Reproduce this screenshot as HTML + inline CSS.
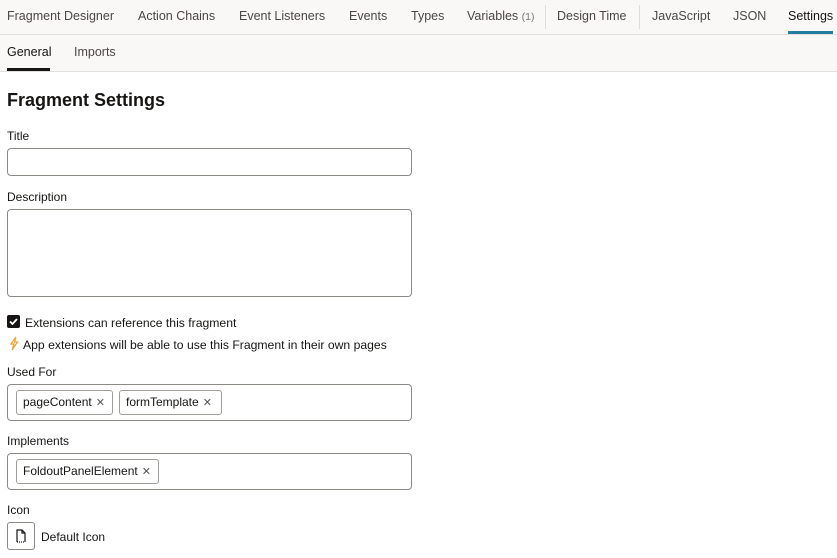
<!DOCTYPE html>
<html><head><meta charset="utf-8"><style>
*{box-sizing:border-box;margin:0;padding:0}
body{width:837px;height:558px;overflow:hidden;background:#fff;font-family:"Liberation Sans",sans-serif;color:#161513;position:relative;font-size:12px}
.a{position:absolute;white-space:nowrap}
.nav{position:absolute;left:0;top:0;width:837px;height:35px;background:#f9f8f6;border-bottom:1px solid #e2e0dd}
.sub{position:absolute;left:0;top:35px;width:837px;height:37px;background:#f9f8f6;border-bottom:1px solid #e2e0dd}
.t{font-size:12.5px;color:#4a4744;top:9px}
.lbl{font-size:12px;color:#161513}
.box{position:absolute;left:7px;width:405px;border:1px solid #8c8985;border-radius:4px;background:#fff}
.chip{position:absolute;height:25px;border:1px solid #a19e9a;border-radius:3px;font-size:12px;line-height:23px;padding-left:6px;color:#161513;background:#fff}
.chip span{color:#555;font-size:11px;margin-left:4px}
</style></head><body>
<div class="nav"></div>
<div class="sub"></div>
<div class="a t" style="left:7px">Fragment Designer</div>
<div class="a t" style="left:138px">Action Chains</div>
<div class="a t" style="left:239px">Event Listeners</div>
<div class="a t" style="left:349px">Events</div>
<div class="a t" style="left:411px">Types</div>
<div class="a t" style="left:467px">Variables <span style="font-size:10.5px;color:#777">(1)</span></div>
<div class="a" style="left:545px;top:5px;width:1px;height:24px;background:#ddd"></div>
<div class="a t" style="left:557px">Design Time</div>
<div class="a" style="left:639px;top:5px;width:1px;height:24px;background:#ddd"></div>
<div class="a t" style="left:652px">JavaScript</div>
<div class="a t" style="left:733px">JSON</div>
<div class="a t" style="left:788px;color:#161513">Settings</div>
<div class="a" style="left:788px;top:31px;width:45px;height:3px;background:#227e9e"></div>
<div class="a" style="left:7px;top:45px;font-size:12.5px;color:#161513">General</div>
<div class="a" style="left:7px;top:68px;width:43px;height:3px;background:#161513"></div>
<div class="a" style="left:74px;top:45px;font-size:12.5px;color:#4a4744">Imports</div>
<div class="a" style="left:7px;top:90px;font-size:18px;font-weight:bold">Fragment Settings</div>
<div class="a lbl" style="left:7px;top:129px">Title</div>
<div class="box" style="top:148px;height:28px"></div>
<div class="a lbl" style="left:7px;top:190px">Description</div>
<div class="box" style="top:209px;height:88px"></div>
<div class="a" style="left:7px;top:315px;width:13px;height:13px;background:#161513;border-radius:2px"><svg width="13" height="13"><path d="M3 6.5 L5.5 9 L10 4" stroke="#fff" stroke-width="1.8" fill="none"/></svg></div>
<div class="a lbl" style="left:25px;top:316px;font-size:12.2px">Extensions can reference this fragment</div>
<svg class="a" style="left:9px;top:336px" width="10" height="15"><path d="M7 1 L2 8 L5 8 L3 14 L8.5 6 L5.5 6 Z" fill="none" stroke="#f0a030" stroke-width="1.2"/></svg>
<div class="a lbl" style="left:23px;top:338px;font-size:12.2px">App extensions will be able to use this Fragment in their own pages</div>
<div class="a lbl" style="left:7px;top:365px">Used For</div>
<div class="box" style="top:384px;height:37px"></div>
<div class="chip" style="left:16px;top:390px;width:97px">pageContent<span>✕</span></div>
<div class="chip" style="left:119px;top:390px;width:103px">formTemplate<span>✕</span></div>
<div class="a lbl" style="left:7px;top:434px">Implements</div>
<div class="box" style="top:453px;height:37px"></div>
<div class="chip" style="left:16px;top:459px;width:143px">FoldoutPanelElement<span>✕</span></div>
<div class="a lbl" style="left:7px;top:503px">Icon</div>
<div class="a" style="left:7px;top:522px;width:28px;height:28px;border:1px solid #8c8985;border-radius:3px;background:#fff"><svg width="26" height="26"><path d="M9 19 L9 7 L14 7 L17 10 L17 19 M14 7 L14 10 L17 10" stroke="#161513" stroke-width="1.2" fill="none"/><path d="M9 19 L17 19" stroke="#161513" stroke-width="1.2" stroke-dasharray="1 1" fill="none"/></svg></div>
<div class="a lbl" style="left:41px;top:530px">Default Icon</div>
</body></html>
